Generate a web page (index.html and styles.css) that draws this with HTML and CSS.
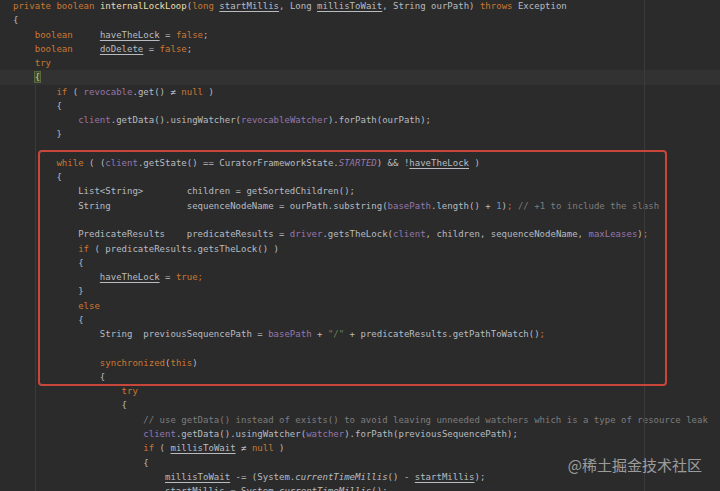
FILE: index.html
```html
<!DOCTYPE html>
<html lang="en">
<head>
    <meta charset="UTF-8">
    <meta name="viewport" content="width=device-width, initial-scale=1.0">
    <title>internalLockLoop</title>
    <link rel="stylesheet" href="styles.css">
</head>
<body>
    <div class="editor">
        <!-- right margin + indent guide -->
        <div class="margin-guide"></div>
        <div class="indent-guide"></div>

        <div class="code">
<div class="line"><span class="k">private boolean</span> <span class="m">internalLockLoop</span>(<span class="k">long</span> <span class="u">startMillis</span>, Long <span class="u">millisToWait</span>, String ourPath) <span class="k">throws</span> Exception</div>
<div class="line">{</div>
<div class="line">    <span class="k">boolean</span>     <span class="u">haveTheLock</span> = <span class="k">false</span>;</div>
<div class="line">    <span class="k">boolean</span>     <span class="u">doDelete</span> = <span class="k">false</span>;</div>
<div class="line">    <span class="k">try</span></div>
<div class="line current">    <span class="brace">{</span></div>
<div class="line">        <span class="k">if</span> ( <span class="f">revocable</span>.get() ≠ <span class="k">null</span> )</div>
<div class="line">        {</div>
<div class="line">            <span class="f">client</span>.getData().usingWatcher(<span class="f">revocableWatcher</span>).forPath(ourPath);</div>
<div class="line">        }</div>
<div class="line"> </div>
<div class="line">        <span class="k">while</span> ( (<span class="f">client</span>.getState() == CuratorFrameworkState.<span class="f i">STARTED</span>) &amp;&amp; !<span class="u">haveTheLock</span> )</div>
<div class="line">        {</div>
<div class="line">            List&lt;String&gt;        children = getSortedChildren();</div>
<div class="line">            String              sequenceNodeName = ourPath.substring(<span class="f">basePath</span>.length() + <span class="n">1</span>)<span class="k">;</span> <span class="c">// +1 to include the slash</span></div>
<div class="line"> </div>
<div class="line">            PredicateResults    predicateResults = <span class="f">driver</span>.getsTheLock(<span class="f">client</span>, children, sequenceNodeName, <span class="f">maxLeases</span>)<span class="k">;</span></div>
<div class="line">            <span class="k">if</span> ( predicateResults.getsTheLock() )</div>
<div class="line">            {</div>
<div class="line">                <span class="u">haveTheLock</span> = <span class="k">true;</span></div>
<div class="line">            }</div>
<div class="line">            <span class="k">else</span></div>
<div class="line">            {</div>
<div class="line">                String  previousSequencePath = <span class="f">basePath</span> + <span class="s">"/"</span> + predicateResults.getPathToWatch()<span class="k">;</span></div>
<div class="line"> </div>
<div class="line">                <span class="k">synchronized</span>(<span class="k">this</span>)</div>
<div class="line">                {</div>
<div class="line">                    <span class="k">try</span></div>
<div class="line">                    {</div>
<div class="line">                        <span class="c">// use getData() instead of exists() to avoid leaving unneeded watchers which is a type of resource leak</span></div>
<div class="line">                        <span class="f">client</span>.getData().usingWatcher(<span class="f">watcher</span>).forPath(previousSequencePath);</div>
<div class="line">                        <span class="k">if</span> ( <span class="u">millisToWait</span> ≠ <span class="k">null</span> )</div>
<div class="line">                        {</div>
<div class="line">                            <span class="u">millisToWait</span> -= (System.<span class="i">currentTimeMillis</span>() - <span class="u">startMillis</span>);</div>
<div class="line">                            <span class="u">startMillis</span> = System.<span class="i">currentTimeMillis</span>();</div>
        </div>

        <!-- red highlight drawn over the loop -->
        <div class="highlight-box"></div>
        <div class="watermark">@稀土掘金技术社区</div>
    </div>
</body>
</html>
```

FILE: styles.css
```css
/* Page */
body {
    margin: 0;
    background-color: #2b2b2b;
    overflow: hidden;
}

/* Editor area */
.editor {
    position: relative;
    width: 720px;
    height: 491px;
    overflow: hidden;
    background-color: #2b2b2b;
}

.code {
    margin-top: -1px;
    font-family: 'DejaVu Sans Mono', 'Liberation Mono', monospace;
    font-size: 9px;
    letter-spacing: 0.01px;
    color: #b8bcc1;
}

.line {
    height: 14.27px;
    line-height: 14.27px;
    padding-left: 13px;
    white-space: pre;
}

.line.current {
    background-color: #323232;
}

/* Syntax colours */
.k { color: #cc7832; }
.m { color: #eedcad; }
.f { color: #9876aa; }
.n { color: #6897bb; }
.s { color: #6a8759; }
.c { color: #7d7d7d; }
.i { font-style: italic; }

.u {
    text-decoration: underline;
    text-decoration-thickness: 1px;
    text-underline-offset: 2px;
}

.brace {
    color: #cfd85a;
    background-color: #3d4b3a;
    outline: 1px solid #59683f;
}

/* Guides */
.margin-guide {
    position: absolute;
    top: 0;
    left: 644px;
    width: 1px;
    height: 100%;
    background-color: #3b3b3b;
}

.indent-guide {
    position: absolute;
    top: 84px;
    left: 35px;
    width: 1px;
    height: 420px;
    background-color: #3a3a3a;
}

/* Overlays */
.highlight-box {
    position: absolute;
    top: 150px;
    left: 38px;
    width: 625px;
    height: 232px;
    border: 2px solid #c9473a;
    border-radius: 4px;
}

.watermark {
    position: absolute;
    right: 18px;
    bottom: 16px;
    font-family: 'Noto Sans CJK SC', 'DejaVu Sans', sans-serif;
    font-size: 15px;
    color: rgba(255, 255, 255, 0.55);
}
```
